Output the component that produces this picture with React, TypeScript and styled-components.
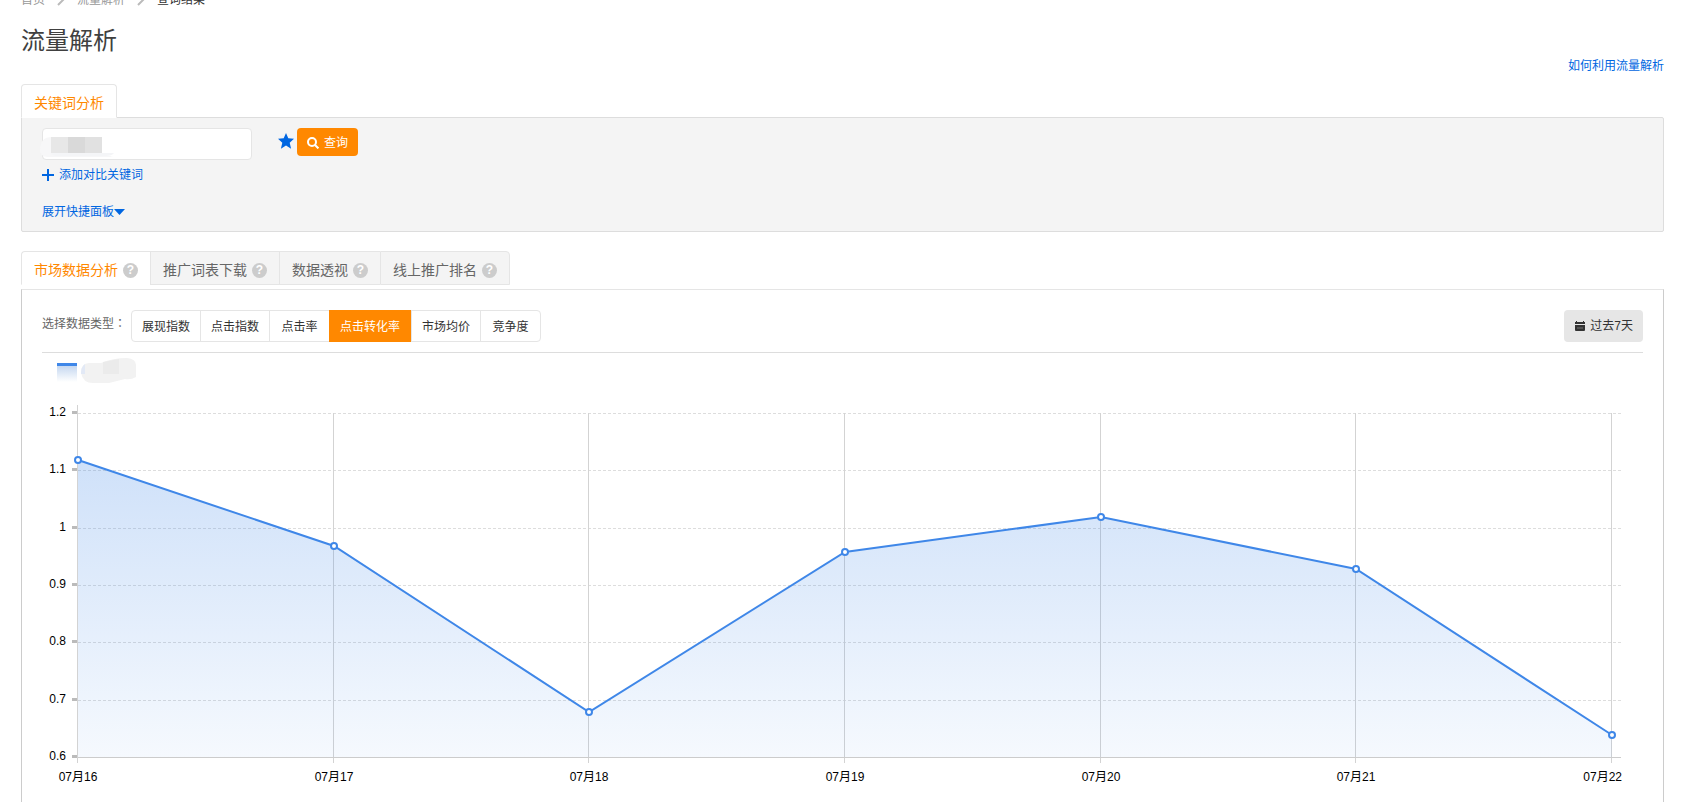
import React, { useLayoutEffect, useRef, useState } from 'react';
import styled, { createGlobalStyle, css } from 'styled-components';

const BLUE = '#0066e1';
const ORANGE = '#ff8800';

const GlobalStyle = createGlobalStyle`
  * { box-sizing: border-box; }
  body {
    margin: 0;
    background: #fff;
    color: #333;
    font: 12px/16px "Liberation Sans", "Noto Sans CJK SC", sans-serif;
  }
  button, input { font: inherit; color: inherit; }
  a { color: ${BLUE}; text-decoration: none; }
`;

const Page = styled.div`
  display: flex;
  flex-direction: column;
  min-height: 100vh;
  padding: 0 18px 0 21px;
  overflow: hidden;
`;

const Breadcrumb = styled.nav`
  display: flex;
  align-items: center;
  margin-top: -8px;
  a { color: #999; }
  svg { width: 8px; height: 16px; margin: 0 12px; }
`;

const Title = styled.h1`
  margin: 17px 0 0;
  font-size: 24px;
  line-height: 32px;
  font-weight: 400;
  color: #404040;
`;

const HelpLink = styled.a`
  align-self: flex-end;
  margin-top: 1px;
`;

const Tabs = styled.div`
  display: flex;
  position: relative;
`;

const Tab = styled.button<{ $active?: boolean }>`
  display: flex;
  align-items: center;
  gap: 5px;
  height: 34px;
  padding: 4px 12px 0 12px;
  border: 1px solid #e5e5e5;
  border-right-width: 0;
  background: #f4f4f4;
  color: #666;
  font-size: 14px;
  line-height: 20px;
  &:first-child { border-top-left-radius: 4px; }
  &:last-child { border-right-width: 1px; border-top-right-radius: 4px; }
  ${p => p.$active && css`
    background: #fff;
    color: ${ORANGE};
    border-bottom-color: #fff;
  `}
`;

const HelpMark = styled.span`
  width: 15px;
  height: 15px;
  border-radius: 50%;
  background: #ccc;
  color: #fff;
  font-size: 12px;
  line-height: 15px;
  font-weight: 700;
  text-align: center;
`;

const KeywordTabs = styled(Tabs)`
  margin-top: 10px;
  margin-bottom: -1px;
`;

const QueryPanel = styled.section`
  display: flex;
  flex-direction: column;
  align-items: flex-start;
  padding: 10px 20px 11px;
  background: #f4f4f4;
  border: 1px solid #ddd;
  border-radius: 0 2px 2px 2px;
`;

const QueryRow = styled.form`
  display: flex;
  align-items: flex-start;
`;

const Field = styled.div`
  position: relative;
  width: 210px;
  height: 32px;
  margin-right: 26px;
  svg { position: absolute; left: -2px; top: 8px; }
`;

const KeywordInput = styled.input`
  width: 100%;
  height: 100%;
  padding: 0 10px;
  border: 1px solid #e5e5e5;
  border-radius: 4px;
  background: #fff;
`;

const StarButton = styled.button`
  display: flex;
  padding: 0;
  margin: 5px 3px 0 0;
  border: 0;
  background: none;
`;

const SearchButton = styled.button`
  display: flex;
  align-items: center;
  gap: 5px;
  height: 28px;
  padding: 1px 10px 0;
  border: 0;
  border-radius: 4px;
  background: ${ORANGE};
  color: #fff;
`;

const PanelLink = styled.a<{ $gap?: boolean }>`
  display: flex;
  align-items: center;
  gap: ${p => (p.$gap ? 5 : 0)}px;
  margin-top: ${p => (p.$gap ? 7 : 21)}px;
`;

const DataTabs = styled(Tabs)`
  margin-top: 19px;
  margin-bottom: 4px;
`;

const DataPanel = styled.section`
  flex: 1;
  padding: 20px 20px 0;
  border: 1px solid #ccc;
  border-top-color: #e5e5e5;
  border-bottom: 0;
`;

const Toolbar = styled.div`
  display: flex;
  align-items: flex-start;
  padding-bottom: 10px;
  border-bottom: 1px solid #ddd;
`;

const ToolbarLabel = styled.span`
  width: 89px;
  padding-top: 5px;
  color: #666;
  white-space: nowrap;
`;

const Colon = styled.span`
  font-family: "Noto Sans CJK TC", sans-serif;
`;

const Segments = styled.div`
  display: flex;
  height: 32px;
  border: 1px solid #e5e5e5;
  border-radius: 4px;
`;

const Segment = styled.button<{ $active?: boolean }>`
  min-width: 60px;
  padding: 2px 10px 0;
  border: 0;
  border-left: 1px solid #e5e5e5;
  background: none;
  &:first-child { border-left: 0; }
  ${p => p.$active && css`
    margin: -1px 0;
    padding-right: 11px;
    border-color: ${ORANGE};
    background: ${ORANGE};
    color: #fff;
  `}
`;

const DateButton = styled.button`
  display: flex;
  align-items: center;
  gap: 5px;
  height: 32px;
  margin-left: auto;
  padding: 0 10px 0 11px;
  border: 0;
  border-radius: 4px;
  background: #e6e6e6;
`;

const Legend = styled.div`
  display: flex;
  height: 52px;
  padding: 5px 0 0 15px;
  gap: 4px;
`;

const Swatch = styled.span`
  width: 20px;
  height: 19px;
  margin-top: 5px;
  border-top: 3px solid #3f87e8;
  background: linear-gradient(#c5d7f0, #fff);
`;

const ChartBox = styled.div`
  height: 384px;
  svg { display: block; }
  text { font-size: 12px; fill: #000; }
`;

const days = [
  { label: '07月16', value: 1.12 },
  { label: '07月17', value: 0.97 },
  { label: '07月18', value: 0.68 },
  { label: '07月19', value: 0.96 },
  { label: '07月20', value: 1.02 },
  { label: '07月21', value: 0.93 },
  { label: '07月22', value: 0.64 },
];
const levels = [1.2, 1.1, 1, 0.9, 0.8, 0.7, 0.6];

const PLOT_LEFT = 36;
const PLOT_TOP = 8;
const PLOT_HEIGHT = 344;

function Chart() {
  const box = useRef<HTMLDivElement>(null);
  const [width, setWidth] = useState(1600);
  useLayoutEffect(() => {
    const node = box.current;
    if (!node) return;
    const measure = () => setWidth(node.clientWidth);
    measure();
    const observer = new ResizeObserver(measure);
    observer.observe(node);
    return () => observer.disconnect();
  }, []);

  const axisEnd = width - 22;
  const bottom = PLOT_TOP + PLOT_HEIGHT;
  const step = (width - 31 - PLOT_LEFT) / (days.length - 1);
  const x = (i: number) => Math.round(PLOT_LEFT + i * step);
  const y = (v: number) => PLOT_TOP + ((1.2 - v) / 0.6) * PLOT_HEIGHT;
  const pointY = (v: number) => Math.round(y(v)) + 1;
  const line = days.map((d, i) => `${x(i)},${pointY(d.value)}`).join(' ');
  const last = days.length - 1;

  return (
    <ChartBox ref={box}>
      <svg width={width} height={384} role="img" aria-label="点击转化率">
        <defs>
          <linearGradient id="area" x1="0" y1="0" x2="0" y2="1">
            <stop offset="0" stopColor="#3f87e8" stopOpacity="0.25" />
            <stop offset="1" stopColor="#3f87e8" stopOpacity="0.05" />
          </linearGradient>
        </defs>
        {levels.map(v => {
          const py = Math.round(y(v));
          return (
            <g key={v}>
              {v > 0.6 && <path d={`M${PLOT_LEFT} ${py + 0.5}H${axisEnd}`} stroke="#ddd" strokeDasharray="3 2" />}
              <path d={`M${PLOT_LEFT - 6} ${py - 0.5}h6`} stroke="#bbb" strokeWidth="3" />
              <text x={PLOT_LEFT - 12} y={py + 3} textAnchor="end">{v}</text>
            </g>
          );
        })}
        {days.map((d, i) => (
          <g key={d.label}>
            <path d={`M${x(i) - 0.5} ${i ? PLOT_TOP : 0}V${bottom + 6}`} stroke="#d3d3d3" />
            <text
              x={i === last ? axisEnd + 1 : x(i)}
              y={bottom + 24}
              textAnchor={i === last ? 'end' : 'middle'}
            >
              {d.label}
            </text>
          </g>
        ))}
        <path d={`M${PLOT_LEFT} ${bottom + 0.5}H${axisEnd}`} stroke="#ccc" />
        <polygon points={`${x(0)},${bottom} ${line} ${x(last)},${bottom}`} fill="url(#area)" />
        <polyline points={line} fill="none" stroke="#3f87e8" strokeWidth="2" />
        {days.map((d, i) => (
          <circle key={d.label} cx={x(i)} cy={pointY(d.value)} r="3" fill="#fff" stroke="#3f87e8" strokeWidth="2" />
        ))}
      </svg>
    </ChartBox>
  );
}

const Chevron = () => (
  <svg viewBox="0 0 8 16" fill="none" stroke="#bbb" strokeWidth="2" aria-hidden="true">
    <path d="M1 1l6 6-6 6" />
  </svg>
);

const dataTabs = ['市场数据分析', '推广词表下载', '数据透视', '线上推广排名'];
const metrics = ['展现指数', '点击指数', '点击率', '点击转化率', '市场均价', '竞争度'];

export default function App() {
  const [tab, setTab] = useState(0);
  const [metric, setMetric] = useState(3);

  return (
    <Page>
      <GlobalStyle />
      <Breadcrumb>
        <a href="#home">首页</a>
        <Chevron />
        <a href="#traffic">流量解析</a>
        <Chevron />
        <span>查询结果</span>
      </Breadcrumb>
      <Title>流量解析</Title>
      <HelpLink href="#help">如何利用流量解析</HelpLink>

      <KeywordTabs>
        <Tab type="button" $active>关键词分析</Tab>
      </KeywordTabs>
      <QueryPanel>
        <QueryRow onSubmit={e => e.preventDefault()}>
          <Field>
            <KeywordInput aria-label="关键词" />
            <svg width="76" height="22" aria-hidden="true">
              <path d="M0 14Q0 1 12 1H40V20H74Q72 20 70 21H8Q0 21 0 14Z" fill="#f7f7f8" />
              <path d="M11 17H74Q72 20 66 20H17Q12 20 11 17Z" fill="#f4f5f7" />
              <path d="M11 1h17v16H11z" fill="#e7e7e7" />
              <path d="M28 1h17v16H28z" fill="#d9d9d9" />
              <path d="M45 1h17v16H45z" fill="#e1e1e1" />
            </svg>
          </Field>
          <StarButton type="button" aria-label="收藏">
            <svg width="16" height="16" viewBox="0 0 16 16" fill={BLUE}>
              <path d="M8 0l2.3 5.3 5.7.5-4.3 3.9 1.4 6.1L8 12.6l-5.1 3.2 1.4-6.1L0 5.8l5.7-.5z" />
            </svg>
          </StarButton>
          <SearchButton type="submit">
            <svg width="12" height="12" viewBox="0 0 12 12" fill="none" stroke="#fff" strokeWidth="2" aria-hidden="true">
              <circle cx="5" cy="5" r="4" />
              <path d="M8 8l3.400 3.400" />
            </svg>
            查询
          </SearchButton>
        </QueryRow>
        <PanelLink href="#add" $gap>
          <svg width="12" height="12" viewBox="0 0 12 12" stroke={BLUE} strokeWidth="2" aria-hidden="true">
            <path d="M6 0v12M0 6h12" />
          </svg>
          添加对比关键词
        </PanelLink>
        <PanelLink href="#expand">
          展开快捷面板
          <svg width="11" height="6" viewBox="0 0 11 6" fill={BLUE} aria-hidden="true">
            <path d="M0 0h11L5.500 6z" />
          </svg>
        </PanelLink>
      </QueryPanel>

      <DataTabs>
        {dataTabs.map((name, i) => (
          <Tab key={name} type="button" $active={i === tab} onClick={() => setTab(i)}>
            {name}
            <HelpMark>?</HelpMark>
          </Tab>
        ))}
      </DataTabs>
      <DataPanel>
        <Toolbar>
          <ToolbarLabel>选择数据类型<Colon lang="zh-TW">：</Colon></ToolbarLabel>
          <Segments>
            {metrics.map((name, i) => (
              <Segment key={name} type="button" $active={i === metric} onClick={() => setMetric(i)}>
                {name}
              </Segment>
            ))}
          </Segments>
          <DateButton type="button">
            <svg width="10" height="10" viewBox="0 0 10 10" fill="#333" aria-hidden="true">
              <path d="M0 1h1V0h1v1h6V0h1v1h1v2H0zM0 4h10v5q0 1-1 1H1q-1 0-1-1z" />
              <path d="M2 7h6" stroke="#777" />
            </svg>
            过去7天
          </DateButton>
        </Toolbar>
        <Legend>
          <Swatch />
          <svg width="56" height="26" aria-hidden="true">
            <path d="M0 15Q0 5 8 5H20Q32 0 46 0Q55 1 55 7V19Q50 22 44 21L28 25H12Q2 25 0 15Z" fill="#f2f2f2" />
            <path d="M0 15Q0 9 4 6V16H0Z" fill="#e2e9f6" />
            <path d="M22 4L38 1V16H22Z" fill="#ebebeb" />
          </svg>
        </Legend>
        <Chart />
      </DataPanel>
    </Page>
  );
}
